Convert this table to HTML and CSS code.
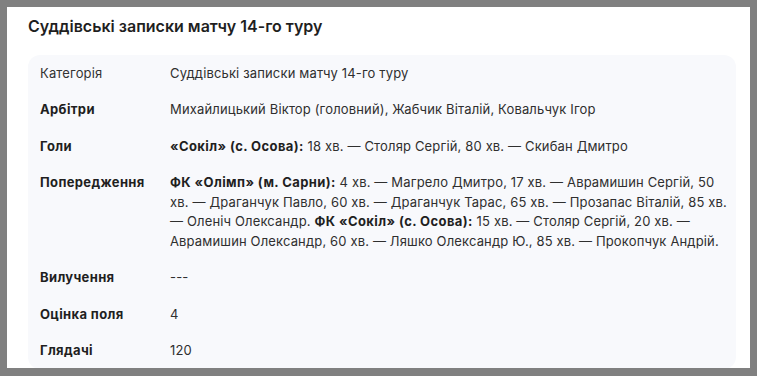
FILE: index.html
```html
<!DOCTYPE html>
<html lang="uk">
<head>
<meta charset="utf-8">
<title>Суддівські записки матчу 14-го туру</title>
<link rel="stylesheet" href="styles.css">
</head>
<body>
<div class="panel">
  <h1 class="title">Суддівські записки матчу 14-го туру</h1>
  <div class="card">
    <div class="row">
      <div class="label regular">Категорія</div>
      <div class="value">Суддівські записки матчу 14-го туру</div>
    </div>
    <div class="row">
      <div class="label">Арбітри</div>
      <div class="value">Михайлицький Віктор (головний), Жабчик Віталій, Ковальчук Ігор</div>
    </div>
    <div class="row">
      <div class="label">Голи</div>
      <div class="value"><b>«Сокіл» (с. Осова):</b> 18 хв. — Столяр Сергій, 80 хв. — Скибан Дмитро</div>
    </div>
    <div class="row">
      <div class="label">Попередження</div>
      <div class="value"><b>ФК «Олімп» (м. Сарни):</b> 4 хв. — Магрело Дмитро, 17 хв. — Аврамишин Сергій, 50 хв. — Драганчук Павло, 60 хв. — Драганчук Тарас, 65 хв. — Прозапас Віталій, 85 хв. — Оленіч Олександр. <b>ФК «Сокіл» (с. Осова):</b> 15 хв. — Столяр Сергій, 20 хв. — Аврамишин Олександр, 60 хв. — Ляшко Олександр Ю., 85 хв. — Прокопчук Андрій.</div>
    </div>
    <div class="row">
      <div class="label">Вилучення</div>
      <div class="value">---</div>
    </div>
    <div class="row">
      <div class="label">Оцінка поля</div>
      <div class="value">4</div>
    </div>
    <div class="row">
      <div class="label">Глядачі</div>
      <div class="value">120</div>
    </div>
  </div>
</div>
</body>
</html>
```

FILE: styles.css
```css
* { box-sizing: border-box; }
html, body { margin: 0; }
body {
  background: #808080;
  padding: 7px 7px 8px 7px;
  height: 376px;
  font-family: Inter, "Noto Sans", sans-serif;
  color: #1f1f1f;
}
.panel {
  background: #ffffff;
  height: 361px;
  overflow: hidden;
  padding: 7px 14px 0 21px;
}
.title {
  margin: 0 0 17px 0;
  font-size: 16px;
  line-height: 24px;
  font-weight: 600;
  color: #1f1f1f;
}
.card {
  background: #f8f9fc;
  border-radius: 12px;
  padding: 0 6px 0 12px;
}
.row {
  display: flex;
  padding: 8.5px 0;
  font-size: 13px;
  line-height: 19.5px;
  letter-spacing: 0.15px;
}
.label {
  flex: 0 0 130px;
  font-weight: 700;
  color: #1f1f1f;
  letter-spacing: 0.35px;
}
.label.regular { font-weight: 400; color: #333; letter-spacing: 0.15px; }
.value {
  flex: 1;
  color: #2f2f2f;
}
.value b { font-weight: 700; color: #1f1f1f; letter-spacing: 0.4px; }
```
